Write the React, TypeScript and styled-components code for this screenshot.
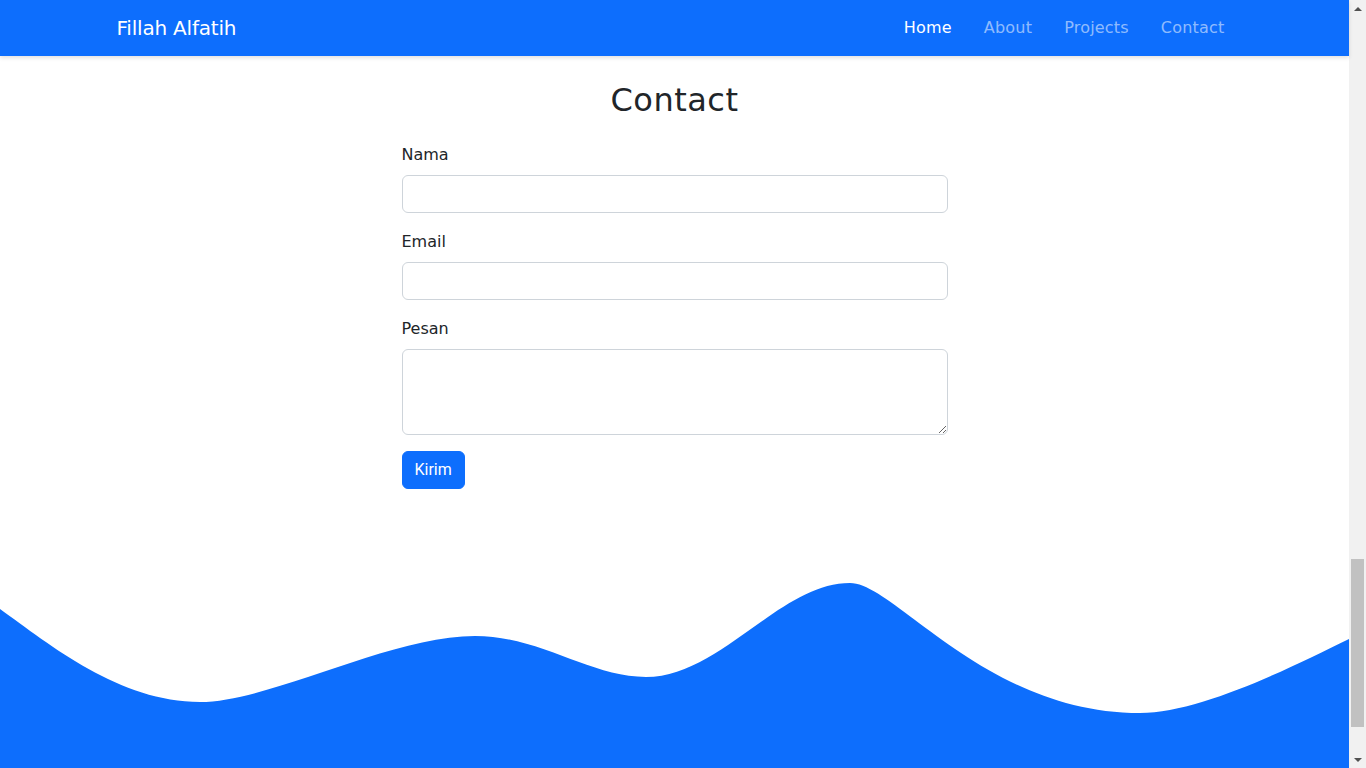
import React from 'react'
import styled, { createGlobalStyle } from 'styled-components'

const primary = '#0d6efd'
const textColor = '#212529'

const GlobalStyle = createGlobalStyle`
  body {
    margin: 0;
    font-family: 'DejaVu Sans', 'Noto Sans', sans-serif;
    font-size: 16px;
    line-height: 1.5;
    color: ${textColor};
    background: #fff;
    overflow: hidden;
  }
  *, *::before, *::after {
    box-sizing: border-box;
  }
`

const Viewport = styled.div`
  display: flex;
  height: 100vh;
`

const Page = styled.div`
  flex: 1;
  min-width: 0;
  display: flex;
  flex-direction: column;
`

const ScrollTrack = styled.div`
  width: 17px;
  flex-shrink: 0;
  display: flex;
  flex-direction: column;
  align-items: center;
  background: #f1f1f1;
`

const ScrollArrow = styled.div<{ $down?: boolean }>`
  height: 17px;
  width: 100%;
  display: flex;
  align-items: center;
  justify-content: center;
  &::after {
    content: '';
    border-left: 4px solid transparent;
    border-right: 4px solid transparent;
    ${p => (p.$down ? 'border-top: 4px solid #505050;' : 'border-bottom: 4px solid #505050;')}
  }
`

const ScrollSpace = styled.div`
  flex: 1;
  width: 100%;
  display: flex;
  flex-direction: column;
  justify-content: flex-end;
  align-items: center;
  padding-bottom: 24px;
`

const ScrollThumb = styled.div`
  width: 13px;
  height: 168px;
  background: #c1c1c1;
`

const Navbar = styled.nav`
  position: relative;
  z-index: 10;
  height: 56px;
  flex-shrink: 0;
  background: ${primary};
  box-shadow: 0 2px 4px rgba(0, 0, 0, 0.12);
`

const Container = styled.div`
  max-width: 1140px;
  height: 100%;
  margin: 0 auto;
  padding: 0 12px;
`

const NavInner = styled(Container)`
  display: flex;
  align-items: center;
  justify-content: space-between;
  padding-right: 20px;
`

const Brand = styled.a`
  font-size: 20px;
  font-weight: 500;
  color: #fff;
  text-decoration: none;
  letter-spacing: -0.2px;
`

const NavList = styled.ul`
  display: flex;
  gap: 32px;
  margin: 0;
  padding: 0;
  list-style: none;
`

const NavLink = styled.a<{ $active?: boolean }>`
  font-size: 16px;
  font-weight: 500;
  color: ${p => (p.$active ? '#fff' : 'rgba(255, 255, 255, 0.55)')};
  text-decoration: none;
  letter-spacing: 0.2px;
`

const Section = styled.section`
  padding-top: 25px;
`

const Heading = styled.h2`
  margin: 0 0 23px;
  font-size: 32px;
  font-weight: 500;
  line-height: 1.2;
  letter-spacing: 0.5px;
  text-align: center;
`

const FormColumn = styled.form`
  width: 546px;
  margin: 0 auto;
`

const Field = styled.div`
  margin-bottom: 16px;
`

const Label = styled.label`
  display: block;
  margin-bottom: 8px;
  font-size: 16px;
  line-height: 25px;
`

const Input = styled.input`
  display: block;
  width: 100%;
  height: 38px;
  padding: 6px 12px;
  font: inherit;
  border: 1px solid #ced4da;
  border-radius: 6px;
  background: #fff;
`

const TextArea = styled.textarea`
  display: block;
  width: 100%;
  height: 86px;
  padding: 6px 12px;
  font: inherit;
  border: 1px solid #ced4da;
  border-radius: 6px;
  resize: vertical;
`

const SubmitButton = styled.button`
  padding: 6px 12px;
  font-family: Roboto, 'Liberation Sans', sans-serif;
  font-size: 16px;
  line-height: 24px;
  color: #fff;
  background: ${primary};
  border: 1px solid ${primary};
  border-radius: 6px;
  cursor: pointer;
`

const Wave = styled.svg`
  display: block;
  width: 100%;
  height: 185px;
  margin-top: auto;
  flex-shrink: 0;
`

export default function App() {
  return (
    <>
      <GlobalStyle />
      <Viewport>
        <Page>
          <Navbar>
            <NavInner>
              <Brand href="#">Fillah Alfatih</Brand>
              <NavList>
                <li><NavLink href="#" $active>Home</NavLink></li>
                <li><NavLink href="#">About</NavLink></li>
                <li><NavLink href="#">Projects</NavLink></li>
                <li><NavLink href="#">Contact</NavLink></li>
              </NavList>
            </NavInner>
          </Navbar>
          <Section>
            <Heading>Contact</Heading>
            <FormColumn onSubmit={e => e.preventDefault()}>
              <Field>
                <Label htmlFor="nama">Nama</Label>
                <Input id="nama" type="text" />
              </Field>
              <Field>
                <Label htmlFor="email">Email</Label>
                <Input id="email" type="email" />
              </Field>
              <Field>
                <Label htmlFor="pesan">Pesan</Label>
                <TextArea id="pesan" rows={3} />
              </Field>
              <SubmitButton type="submit">Kirim</SubmitButton>
            </FormColumn>
          </Section>
          <Wave viewBox="0 0 1349 185" preserveAspectRatio="none">
            <path
              fill={primary}
              d="M0,26 C50,62 120,119 200,119 C270,119 390,53 475,53 C540,53 590,94 646,94 C720,94 780,0 850,0 C895,0 985,130 1140,130 C1200,130 1290,85 1349,56 L1349,185 L0,185 Z"
            />
          </Wave>
        </Page>
        <ScrollTrack>
          <ScrollArrow />
          <ScrollSpace>
            <ScrollThumb />
          </ScrollSpace>
          <ScrollArrow $down />
        </ScrollTrack>
      </Viewport>
    </>
  )
}
